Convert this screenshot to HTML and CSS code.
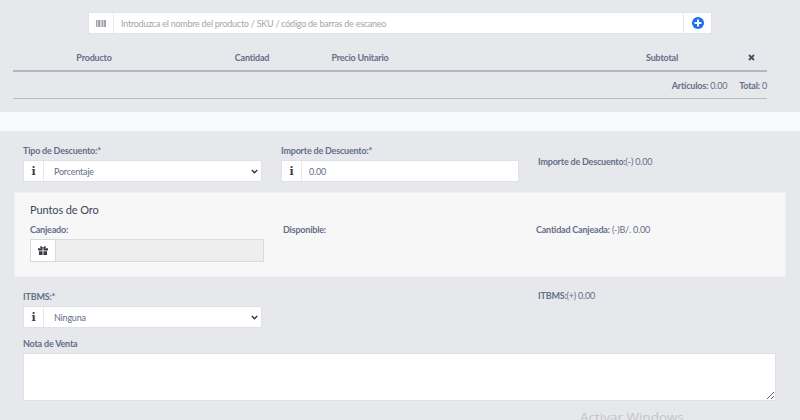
FILE: index.html
```html
<!DOCTYPE html>
<html lang="es">
<head>
<meta charset="utf-8">
<title>Venta</title>
<link rel="stylesheet" href="styles.css">
</head>
<body>
<section class="top">
  <div class="search">
    <span class="addon addon-bar">
      <svg width="10" height="7" viewBox="0 0 10 7"><path fill="#a3a3ad" d="M0 0h1.500v7H0zM2 0h2v7H2zM4.500 0h1v7h-1zM6 0h1.500v7H6zM8 0h2v7H8z"/></svg>
    </span>
    <input class="search-input" type="text" placeholder="Introduzca el nombre del producto / SKU / código de barras de escaneo">
    <span class="addon addon-plus">
      <svg width="12" height="12" viewBox="0 0 12 12"><circle cx="6" cy="6" r="6" fill="#1b6fe8"/><path fill="#fff" d="M5 2.500h2V5h2.500v2H7v2.500H5V7H2.500V5H5z"/></svg>
    </span>
  </div>
  <div class="items">
    <div class="items-head">
      <span>Producto</span>
      <span>Cantidad</span>
      <span class="col-price">Precio Unitario</span>
      <span class="col-sub">Subtotal</span>
      <span class="col-x">
        <svg width="7" height="7" viewBox="0 0 7 7"><path d="M1 1l5 5M6 1L1 6" stroke="#454e67" stroke-width="1.800"/></svg>
      </span>
    </div>
    <div class="items-foot">
      <span><b>Artículos:</b> 0.00</span>
      <span><b>Total:</b> 0</span>
    </div>
  </div>
</section>
<div class="band"></div>
<section class="form">
  <div class="row row-discount">
    <div class="field">
      <label>Tipo de Descuento:*</label>
      <div class="group">
        <span class="addon-i">i</span>
        <select class="control"><option>Porcentaje</option></select>
      </div>
    </div>
    <div class="field">
      <label>Importe de Descuento:*</label>
      <div class="group group-amount">
        <span class="addon-i">i</span>
        <input class="control" type="text" value="0.00">
      </div>
    </div>
    <p class="summary summary-discount"><b>Importe de Descuento:</b>(-) 0.00</p>
  </div>
  <div class="panel">
    <h3>Puntos de Oro</h3>
    <div class="row row-panel">
      <div class="field">
        <label>Canjeado:</label>
        <div class="group group-off">
          <span class="addon-i addon-gift">
            <svg width="10" height="9" viewBox="0 0 11 10"><path fill="#3c3c44" d="M0 2.500h5V5H0zM6 2.500h5V5H6zM1 5.700h4V10H1zM6 5.700h4V10H6zM5.500 2.500C4 2.500 2.200 2.200 2.200 1S4.800.2 5.500 2.200C6.200.2 8.800-.2 8.800 1S7 2.500 5.500 2.500z"/></svg>
          </span>
          <input class="control" type="text" disabled>
        </div>
      </div>
      <p class="summary"><b>Disponible:</b></p>
      <p class="summary"><b>Cantidad Canjeada:</b> (-)B/. 0.00</p>
    </div>
  </div>
  <div class="row row-tax">
    <div class="field">
      <label>ITBMS:*</label>
      <div class="group">
        <span class="addon-i">i</span>
        <select class="control"><option>Ninguna</option></select>
      </div>
    </div>
    <div></div>
    <p class="summary"><b>ITBMS:</b>(+) 0.00</p>
  </div>
  <div class="note">
    <label>Nota de Venta</label>
    <textarea></textarea>
  </div>
</section>
<div class="watermark">Activar Windows</div>
</body>
</html>
```
FILE: styles.css
```css
* { box-sizing: border-box; }
html, body { height: 420px; overflow: hidden; }
body {
  margin: 0;
  background: #e7e8ec;
  font-family: "Lato", "Liberation Sans", sans-serif;
  font-size: 9px;
  letter-spacing: -0.2px;
  color: #656e87;
  position: relative;
}
b, label { font-weight: 700; }
.top { padding: 12px 33px 0 13px; height: 112px; }
.search {
  display: flex;
  height: 22px;
  margin-left: 75px;
  width: 624px;
  background: #fff;
  border: 1px solid #e2e3e8;
}
.addon { display: flex; align-items: center; justify-content: center; flex: none; }
.addon-bar { width: 25px; border-right: 1px solid #e7e8ec; }
.addon-plus { width: 28px; border-left: 1px solid #e7e8ec; }
.search-input {
  flex: 1;
  min-width: 0;
  border: 0;
  padding: 0 7px;
  font: inherit;
  letter-spacing: -0.25px;
  outline: 0;
  background: transparent;
}
.search-input::placeholder { color: #a3a5ac; opacity: 1; }
.items { width: 754px; margin-top: 12px; }
.items-head {
  display: grid;
  grid-template-columns: 162px 154px 62px 198px 146px 32px;
  height: 26px;
  padding-bottom: 1px;
  align-items: center;
  text-align: center;
  font-weight: 700;
  border-bottom: 2px solid #b5b6c2;
}
.items-head span { white-space: nowrap; }
.col-price { display: flex; justify-content: center; }
.col-sub { grid-column: 5; }
.col-x { grid-column: 6; display: flex; justify-content: center; }
.items-foot {
  display: flex;
  justify-content: flex-end;
  gap: 12px;
  align-items: center;
  height: 27px;
  border-bottom: 1px solid #b9bac5;
}
.band { height: 19px; background: #f8f9fd; }
.form { padding: 0 14px; }
.row {
  display: grid;
  grid-template-columns: 258px 257px 1fr;
  padding-left: 9px;
}
.row-discount { height: 61px; padding-top: 13px; }
.row-tax { height: 48px; margin-top: 13px; }
.field { display: flex; flex-direction: column; }
.field label { height: 16px; line-height: 13px; }
.group {
  display: flex;
  width: 239px;
  height: 22px;
  background: #fff;
  border: 1px solid #e0e1e6;
}
.group-amount { width: 238px; }
.addon-i {
  width: 20px;
  flex: none;
  display: flex;
  align-items: center;
  justify-content: center;
  border-right: 1px solid #e7e8ec;
  font-family: "DejaVu Serif", serif;
  font-size: 11px;
  font-weight: 700;
  color: #3c3c44;
}
.control {
  flex: 1;
  min-width: 0;
  border: 0;
  background: #fff;
  padding: 0 7px;
  font: inherit;
  letter-spacing: inherit;
  color: #656e87;
  outline: 0;
}
select.control {
  appearance: none;
  padding-left: 10px;
  background-image: url("data:image/svg+xml,%3Csvg xmlns='http://www.w3.org/2000/svg' width='7' height='5' viewBox='0 0 7 5'%3E%3Cpath d='M.8 1l2.700 2.700L6.200 1' fill='none' stroke='%23333' stroke-width='1.400'/%3E%3C/svg%3E");
  background-repeat: no-repeat;
  background-position: right 3px center;
}
.summary { margin: 0; line-height: 12px; }
.summary-discount { padding-top: 12px; }
.panel {
  height: 85px;
  background: #f7f7f8;
  border: 1px solid #eeeff2;
  padding: 9px 15px 0;
}
.panel h3 {
  margin: 0 0 7px;
  font-size: 11px;
  line-height: 15px;
  font-weight: 400;
  letter-spacing: -0.1px;
  color: #3f4560;
}
.row-panel { padding-left: 0; grid-template-columns: 253px 253px 1fr; }
.row-panel .field label { height: 15px; line-height: 12px; }
.group-off { width: 234px; height: 23px; border-color: #d8dade; }
.addon-gift { width: 25px; border-right: 1px solid #d8dade; }
.group-off .control { background: #eeeeef; }
.note { padding-left: 9px; }
.note label { display: block; height: 15px; line-height: 11px; }
textarea {
  display: block;
  width: 753px;
  height: 48px;
  background: #fff;
  border: 1px solid #dfe0e5;
  outline: 0;
  padding: 4px;
}
.watermark {
  position: absolute;
  left: 580px;
  top: 407px;
  font-family: "Open Sans", sans-serif;
  font-size: 13.5px;
  letter-spacing: 0;
  line-height: 20px;
  color: #c3c4c8;
  white-space: nowrap;
}
```
